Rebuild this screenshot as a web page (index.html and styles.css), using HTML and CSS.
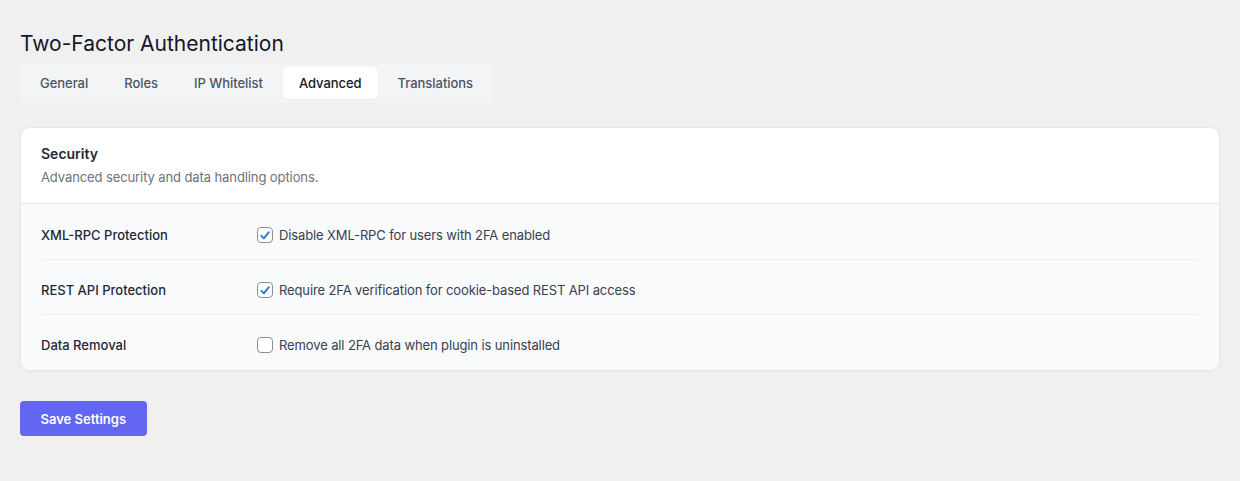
FILE: index.html
```html
<!DOCTYPE html>
<html lang="en">

<head>
  <meta charset="UTF-8" />
  <title>Two-Factor Authentication</title>
  <link rel="stylesheet" href="styles.css">
</head>

<body>
  <div class="wrap">
    <h1>Two-Factor Authentication</h1>

    <div class="tabs">
      <div class="tab">General</div>
      <div class="tab">Roles</div>
      <div class="tab">IP Whitelist</div>
      <div class="tab active">Advanced</div>
      <div class="tab">Translations</div>
    </div>

    <div class="card">
      <div class="card-header">
        <h2>Security</h2>
        <p>Advanced security and data handling options.</p>
      </div>
      <div class="card-body">
        <div class="setting-row">
          <div class="setting-label">XML-RPC Protection</div>
          <label class="check">
            <span class="box checked">
              <svg viewBox="0 0 16 16"><path d="M3.8 8.4l2.9 2.9L12.4 4.2" /></svg>
            </span>
            Disable XML-RPC for users with 2FA enabled
          </label>
        </div>
        <div class="setting-row">
          <div class="setting-label">REST API Protection</div>
          <label class="check">
            <span class="box checked">
              <svg viewBox="0 0 16 16"><path d="M3.8 8.4l2.9 2.9L12.4 4.2" /></svg>
            </span>
            Require 2FA verification for cookie-based REST API access
          </label>
        </div>
        <div class="setting-row">
          <div class="setting-label">Data Removal</div>
          <label class="check">
            <span class="box"></span>
            Remove all 2FA data when plugin is uninstalled
          </label>
        </div>
      </div>
    </div>

    <button class="save-button">Save Settings</button>
  </div>
</body>

</html>
```

FILE: styles.css
```css
body {
  margin: 0;
  background: #f0f0f1;
  font-family: Inter, 'Noto Sans', 'Liberation Sans', sans-serif;
  color: #1d2327;
}

.wrap {
  padding: 30px 20px 20px 20px;
}

h1 {
  margin: 0 0 5px 0;
  font-size: 21px;
  line-height: 28px;
  font-weight: 400;
  color: #111827;
}

.tabs {
  display: inline-flex;
  gap: 4px;
  padding: 4px;
  background: #f3f4f6;
  border-radius: 8px;
}

.tab {
  padding: 0 16px;
  height: 32px;
  line-height: 32px;
  font-size: 13px;
  font-weight: 500;
  letter-spacing: -0.04px;
  color: #4b5563;
  border-radius: 6px;
}

.tab.active {
  background: #fff;
  color: #111827;
  box-shadow: 0 1px 2px rgba(0, 0, 0, 0.04);
}

.card {
  margin-top: 24px;
  background: #fff;
  border: 1px solid #e6e7e9;
  border-radius: 10px;
  box-shadow: 0 1px 3px rgba(0, 0, 0, 0.04);
  overflow: hidden;
}

.card-header {
  padding: 16px 20px 17px 20px;
  border-bottom: 1px solid #e5e7eb;
}

.card-header h2 {
  margin: 0 0 4px 0;
  font-size: 14px;
  line-height: 20px;
  font-weight: 600;
  color: #1f2937;
}

.card-header p {
  margin: 0;
  font-size: 13px;
  line-height: 18px;
  letter-spacing: -0.1px;
  color: #6b7280;
}

.card-body {
  background: #f9fafb;
  padding: 1px 20px 1px 20px;
}

.setting-row {
  display: flex;
  align-items: center;
  padding: 20px 0 14px 0;
  line-height: 20px;
  font-size: 13px;
}

.setting-row + .setting-row {
  border-top: 1px solid #eceef0;
}

.setting-label {
  width: 216px;
  flex-shrink: 0;
  font-weight: 500;
  color: #1f2937;
}

.check {
  display: flex;
  align-items: center;
  gap: 6px;
  color: #374151;
  letter-spacing: -0.12px;
}

.box {
  width: 16px;
  height: 16px;
  box-sizing: border-box;
  border: 1px solid #8c8f94;
  border-radius: 4px;
  background: #fff;
  display: flex;
  align-items: center;
  justify-content: center;
}

.box svg {
  width: 15px;
  height: 15px;
  fill: none;
  stroke: #2b7bd6;
  stroke-width: 2.2;
  stroke-linecap: round;
  stroke-linejoin: round;
}

.save-button {
  display: block;
  margin-top: 30px;
  height: 35px;
  padding: 0 20.5px;
  border: none;
  border-radius: 4px;
  background: #6366f1;
  color: #fff;
  font-family: Inter, 'Noto Sans', sans-serif;
  font-size: 13px;
  font-weight: 600;
  cursor: pointer;
}
```
